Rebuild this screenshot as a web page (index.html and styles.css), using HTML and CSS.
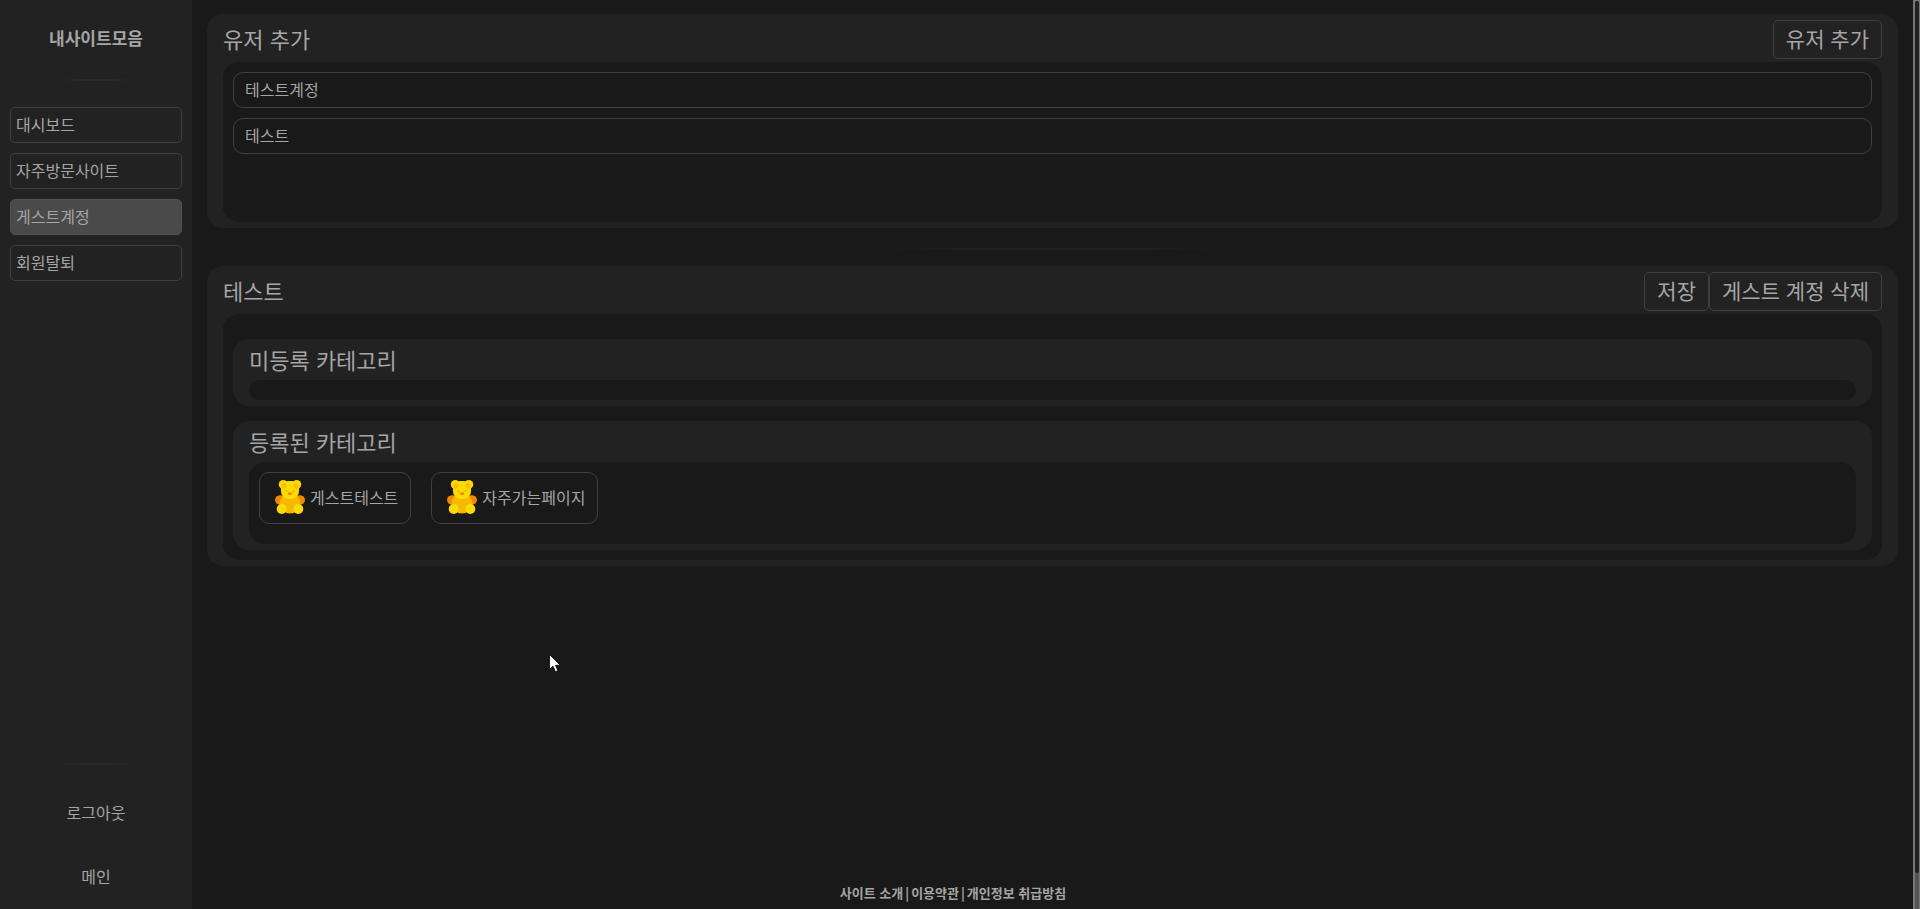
FILE: index.html
```html
<!DOCTYPE html>
<html lang="ko">
<head>
  <meta charset="UTF-8">
  <meta name="viewport" content="width=device-width, initial-scale=1.0">
  <title>내사이트모음</title>
  <link rel="stylesheet" href="styles.css">
</head>
<body>
  <!-- shared bear icon -->
  <svg class="defs" width="0" height="0" aria-hidden="true">
    <symbol id="bear" viewBox="0 0 30 34">
      <ellipse cx="5.500" cy="20" rx="5.500" ry="4.800" fill="#f08a00"/>
      <ellipse cx="24.500" cy="20" rx="5.500" ry="4.800" fill="#f08a00"/>
      <ellipse cx="15" cy="23.500" rx="10.500" ry="10" fill="#f7b900"/>
      <circle cx="8.300" cy="4.500" r="4.500" fill="#fbd800"/>
      <circle cx="21.700" cy="4.500" r="4.500" fill="#fbd800"/>
      <rect x="6" y="1" width="18" height="18" rx="7.500" fill="#fbdc00"/>
      <ellipse cx="9" cy="6" rx="2.200" ry="3" transform="rotate(35 9 6)" fill="#f7c000"/>
      <ellipse cx="21" cy="6" rx="2.200" ry="3" transform="rotate(-35 21 6)" fill="#f7c000"/>
      <circle cx="6.700" cy="29" r="5" fill="#fbdc00"/>
      <circle cx="23.300" cy="29" r="5" fill="#fbdc00"/>
      <circle cx="11.500" cy="11" r="0.900" fill="#f2a000"/>
      <circle cx="18.500" cy="11" r="0.900" fill="#f2a000"/>
      <path d="M13 12.500h4q.5 2-2 2.500q-2.500-.5-2-2.500z" fill="#f57c00"/>
    </symbol>
  </svg>

  <div class="layout">
    <aside class="sidebar">
      <h1 class="site-title">내사이트모음</h1>
      <hr class="line">
      <nav class="menu">
        <a href="#">대시보드</a>
        <a href="#">자주방문사이트</a>
        <a href="#" class="active">게스트계정</a>
        <a href="#">회원탈퇴</a>
      </nav>
      <div class="sidebar-bottom">
        <hr class="line">
        <a href="#">로그아웃</a>
        <a href="#">메인</a>
      </div>
    </aside>

    <main class="content">
      <section class="card">
        <div class="card-header">
          <h2>유저 추가</h2>
          <button type="button">유저 추가</button>
        </div>
        <div class="card-body user-list">
          <a href="#" class="user">테스트계정</a>
          <a href="#" class="user">테스트</a>
        </div>
      </section>

      <hr class="line">

      <section class="card">
        <div class="card-header">
          <h2>테스트</h2>
          <div class="actions">
            <button type="button">저장</button>
            <button type="button">게스트 계정 삭제</button>
          </div>
        </div>
        <div class="card-body category-list">
          <div class="card sub-card">
            <div class="card-header">
              <h2>미등록 카테고리</h2>
            </div>
            <div class="card-body categories"></div>
          </div>
          <div class="card sub-card">
            <div class="card-header">
              <h2>등록된 카테고리</h2>
            </div>
            <div class="card-body categories registered">
              <a href="#" class="category"><svg class="bear"><use href="#bear"/></svg>게스트테스트</a>
              <a href="#" class="category"><svg class="bear"><use href="#bear"/></svg>자주가는페이지</a>
            </div>
          </div>
        </div>
      </section>
    </main>

    <div class="scrollbar"><div class="thumb"></div></div>

    <footer class="footer">
      <a href="#">사이트 소개</a>
      <span>|</span>
      <a href="#">이용약관</a>
      <span>|</span>
      <a href="#">개인정보 취급방침</a>
    </footer>
  </div>

  <svg class="cursor" viewBox="0 0 12 19" aria-hidden="true">
    <path d="M.5.500v15l3.500-3.300 2.400 5.500 2.500-1-2.400-5.400h4.800z" fill="#fff" stroke="#000" stroke-width="0.800"/>
  </svg>
</body>
</html>
```

FILE: styles.css
```css
* {
  box-sizing: border-box;
}
body {
  margin: 0;
  background: #191919;
  color: #a5a5a5;
  font-family: "Noto Sans CJK KR", sans-serif;
  font-size: 16px;
  line-height: 24px;
}
a {
  color: inherit;
  text-decoration: none;
}
h1, h2 {
  margin: 0;
}
.defs {
  position: absolute;
}
.layout {
  display: grid;
  grid-template-columns: 10% 1fr 7px;
  min-height: 100vh;
}
.line {
  width: 36%;
  height: 2px;
  margin: 0 auto;
  border: none;
  background: linear-gradient(to right, transparent, #2a2a2a 30%, #2a2a2a 70%, transparent);
}

/* sidebar */
.sidebar {
  display: flex;
  flex-direction: column;
  grid-area: 1 / 1;
  background: #222;
}
.site-title {
  padding: 26px 0 29px;
  font-size: 17px;
  line-height: 24px;
  text-align: center;
}
.menu {
  display: flex;
  flex-direction: column;
  gap: 10px;
  padding: 26px 10px;
}
.menu a {
  padding: 4px 5px 6px;
  border: 1px solid #3f3f3f;
  border-radius: 5px;
}
.menu .active {
  background: #4a4a4a;
  border-color: #505050;
}
.sidebar-bottom {
  margin-top: auto;
}
.sidebar-bottom .line {
  margin-bottom: 16px;
}
.sidebar-bottom a {
  display: block;
  padding: 19px 0 21px;
  text-align: center;
}

/* main */
.content {
  grid-area: 1 / 2;
  padding: 14px 15px 40px;
}
.content > .line {
  width: 20%;
  margin: 20px auto 16px;
  background: linear-gradient(to right, transparent, #222 30%, #222 70%, transparent);
}
.card {
  padding: 0 16px 6px;
  border-radius: 16px;
  background: #222;
}
.card-header {
  display: flex;
  justify-content: space-between;
  align-items: center;
  height: 48px;
  padding-top: 3px;
}
.card-header h2 {
  padding-bottom: 4px;
  font-size: 22px;
  font-weight: normal;
}
.actions {
  display: flex;
}
.card-header button {
  height: 39px;
  padding: 0 12px 3px;
  border: 1px solid #3f3f3f;
  border-radius: 5px;
  background: none;
  color: inherit;
  font-family: inherit;
  font-size: 21px;
  line-height: 32px;
}
.card-body {
  padding: 10px;
  border-radius: 16px;
  background: #191919;
}
.user-list {
  display: flex;
  flex-direction: column;
  gap: 10px;
  min-height: 160px;
}
.user {
  padding: 4px 11px 6px;
  border: 1px solid #3f3f3f;
  border-radius: 10px;
}
.category-list {
  display: flex;
  flex-direction: column;
  gap: 15px;
  padding-top: 25px;
}
.sub-card .card-header {
  height: 41px;
  padding-top: 2px;
}
.categories {
  display: flex;
  align-items: flex-start;
  gap: 20px;
}
.registered {
  min-height: 82px;
}
.category {
  display: flex;
  align-items: center;
  gap: 5px;
  height: 52px;
  padding: 0 12px 2px 15px;
  border: 1px solid #3f3f3f;
  border-radius: 10px;
}
.bear {
  width: 30px;
  height: 34px;
}

/* footer runs across the sidebar and the content */
.footer {
  display: flex;
  gap: 2px;
  grid-area: 1 / 1 / 2 / 3;
  align-self: end;
  justify-self: center;
  padding: 0 7px 6px 0;
  font-size: 13px;
  font-weight: bold;
  line-height: 20px;
}

/* scrollbar track on the right edge */
.scrollbar {
  grid-area: 1 / 3;
  border: 1px solid #777;
  border-width: 1px 1px 0 2px;
  background: #555;
}
.thumb {
  height: 96%;
  border-radius: 2px;
  background: #222;
}

.cursor {
  position: absolute;
  top: 654px;
  left: 549px;
  width: 12px;
  height: 19px;
}
```
